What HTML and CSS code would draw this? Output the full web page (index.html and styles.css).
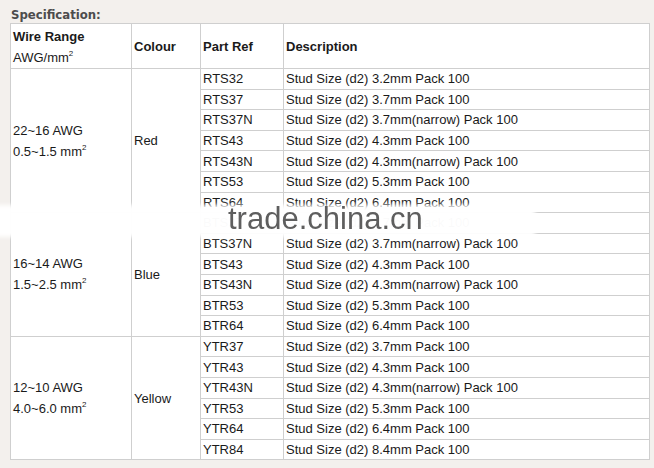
FILE: index.html
```html
<!DOCTYPE html>
<html>
<head>
<meta charset="utf-8">
<link rel="stylesheet" href="styles.css">
</head>
<body>
<div class="page">
  <div class="title">Specification:</div>
  <table class="spec">
    <colgroup>
      <col class="c1"><col class="c2"><col class="c3"><col class="c4">
    </colgroup>
    <thead>
      <tr class="head">
        <th class="range-h">Wire Range<br><span class="unit">AWG/mm<sup>2</sup></span></th>
        <th>Colour</th>
        <th>Part Ref</th>
        <th>Description</th>
      </tr>
    </thead>
    <tbody>
      <tr><td class="range" rowspan="7">22~16 AWG<br>0.5~1.5 mm<sup>2</sup></td><td class="colour" rowspan="7">Red</td><td>RTS32</td><td>Stud Size (d2) 3.2mm Pack 100</td></tr>
      <tr><td>RTS37</td><td>Stud Size (d2) 3.7mm Pack 100</td></tr>
      <tr><td>RTS37N</td><td>Stud Size (d2) 3.7mm(narrow) Pack 100</td></tr>
      <tr><td>RTS43</td><td>Stud Size (d2) 4.3mm Pack 100</td></tr>
      <tr><td>RTS43N</td><td>Stud Size (d2) 4.3mm(narrow) Pack 100</td></tr>
      <tr><td>RTS53</td><td>Stud Size (d2) 5.3mm Pack 100</td></tr>
      <tr><td>RTS64</td><td>Stud Size (d2) 6.4mm Pack 100</td></tr>
      <tr><td class="range" rowspan="6">16~14 AWG<br>1.5~2.5 mm<sup>2</sup></td><td class="colour" rowspan="6">Blue</td><td>BTS37</td><td>Stud Size (d2) 3.7mm Pack 100</td></tr>
      <tr><td>BTS37N</td><td>Stud Size (d2) 3.7mm(narrow) Pack 100</td></tr>
      <tr><td>BTS43</td><td>Stud Size (d2) 4.3mm Pack 100</td></tr>
      <tr><td>BTS43N</td><td>Stud Size (d2) 4.3mm(narrow) Pack 100</td></tr>
      <tr><td>BTR53</td><td>Stud Size (d2) 5.3mm Pack 100</td></tr>
      <tr><td>BTR64</td><td>Stud Size (d2) 6.4mm Pack 100</td></tr>
      <tr><td class="range" rowspan="6">12~10 AWG<br>4.0~6.0 mm<sup>2</sup></td><td class="colour" rowspan="6">Yellow</td><td>YTR37</td><td>Stud Size (d2) 3.7mm Pack 100</td></tr>
      <tr><td>YTR43</td><td>Stud Size (d2) 4.3mm Pack 100</td></tr>
      <tr><td>YTR43N</td><td>Stud Size (d2) 4.3mm(narrow) Pack 100</td></tr>
      <tr><td>YTR53</td><td>Stud Size (d2) 5.3mm Pack 100</td></tr>
      <tr><td>YTR64</td><td>Stud Size (d2) 6.4mm Pack 100</td></tr>
      <tr><td>YTR84</td><td>Stud Size (d2) 8.4mm Pack 100</td></tr>
    </tbody>
  </table>
  <div class="wm-band"></div>
  <div class="wm-text">trade.china.cn</div>
</div>
</body>
</html>
```

FILE: styles.css
```css
html, body {
  margin: 0;
  padding: 0;
  background: #f3f0ed;
}
.page {
  position: relative;
  padding: 6px 5px 0 10px;
  font-family: "Liberation Sans", Arial, sans-serif;
  color: #1a1a1a;
  overflow: hidden;
  height: 468px;
  box-sizing: border-box;
}
.title {
  font-family: "DejaVu Sans Condensed", "DejaVu Sans", sans-serif;
  font-weight: bold;
  font-size: 13px;
  color: #4c4c4c;
  line-height: 17px;
  padding-left: 1px;
}
.spec {
  border-collapse: collapse;
  background: #fff;
  width: 639px;
  table-layout: fixed;
  font-size: 13px;
}
.c1 { width: 121px; }
.c2 { width: 69px; }
.c3 { width: 83px; }
.c4 { width: 366px; }
.spec th, .spec td {
  border: 1px solid #cfcfcf;
  padding: 0 2px;
  text-align: left;
  vertical-align: middle;
  white-space: nowrap;
}
.spec th {
  font-weight: bold;
  height: 43px;
  padding-top: 1px;
}
.range-h {
  line-height: 21px;
}
.unit {
  font-weight: normal;
}
.spec td {
  height: 19.6px;
  line-height: 15px;
}
.spec td.range {
  line-height: 21px;
}
sup {
  font-size: 8px;
  vertical-align: 6px;
  line-height: 0;
}
.wm-band {
  position: absolute;
  left: -10px;
  top: 205px;
  width: 545px;
  height: 32px;
  background: rgba(255, 255, 255, 0.98);
  filter: blur(2px);
}
.wm-text {
  position: absolute;
  left: 228px;
  top: 199px;
  font-family: "Liberation Sans", Arial, sans-serif;
  font-size: 31px;
  color: #5e5e5e;
  line-height: 40px;
  filter: blur(0.5px);
}
```
